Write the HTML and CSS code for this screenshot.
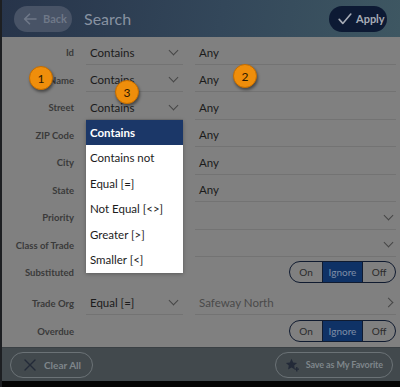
FILE: index.html
```html
<!DOCTYPE html>
<html lang="en">
<head>
    <meta charset="UTF-8">
    <meta name="viewport" content="width=device-width, initial-scale=1.0">
    <title>Search</title>
    <link rel="stylesheet" href="styles.css">
</head>
<body>
<div class="screen">
    <header class="topbar">
        <button class="back-btn">
            <svg width="14" height="12" viewBox="0 0 14 12"><path d="M13 6H2M6.5 1.2L1.6 6l4.9 4.8" fill="none" stroke="currentColor" stroke-width="1.6" stroke-linecap="round" stroke-linejoin="round"/></svg>
            Back
        </button>
        <span class="title">Search</span>
        <button class="apply-btn">
            <svg width="14" height="12" viewBox="0 0 14 12"><path d="M1.2 6.4l3.6 4 8-9.4" fill="none" stroke="currentColor" stroke-width="1.6" stroke-linecap="round" stroke-linejoin="round"/></svg>
            Apply
        </button>
    </header>

    <main class="form">
        <div class="row">
            <span class="label">Id</span>
            <div class="op">Contains <span class="chev"></span></div>
            <div class="val">Any</div>
        </div>
        <div class="row">
            <span class="label">Name</span>
            <div class="op">Contains <span class="chev"></span></div>
            <div class="val">Any</div>
        </div>
        <div class="row">
            <span class="label">Street</span>
            <div class="op">Contains <span class="chev"></span></div>
            <div class="val">Any</div>
        </div>
        <div class="row">
            <span class="label">ZIP Code</span>
            <div class="op">Contains <span class="chev"></span></div>
            <div class="val">Any</div>
        </div>
        <div class="row">
            <span class="label">City</span>
            <div class="op">Contains <span class="chev"></span></div>
            <div class="val">Any</div>
        </div>
        <div class="row">
            <span class="label">State</span>
            <div class="op">Contains <span class="chev"></span></div>
            <div class="val">Any</div>
        </div>
        <div class="row">
            <span class="label">Priority</span>
            <div class="op blank"></div>
            <div class="val"><span></span><span class="chev"></span></div>
        </div>
        <div class="row">
            <span class="label">Class of Trade</span>
            <div class="op blank"></div>
            <div class="val"><span></span><span class="chev"></span></div>
        </div>
        <div class="row toggle-row">
            <span class="label">Substituted</span>
            <div class="switch">
                <span>On</span>
                <span class="on">Ignore</span>
                <span>Off</span>
            </div>
        </div>
        <div class="row trade-row">
            <span class="label">Trade Org</span>
            <div class="op">Equal [=] <span class="chev"></span></div>
            <div class="val muted">Safeway North <span class="chev right"></span></div>
        </div>
        <div class="row toggle-row last">
            <span class="label">Overdue</span>
            <div class="switch">
                <span>On</span>
                <span class="on">Ignore</span>
                <span>Off</span>
            </div>
        </div>

        <ul class="menu">
            <li class="selected">Contains</li>
            <li>Contains not</li>
            <li>Equal [=]</li>
            <li>Not Equal [&lt;&gt;]</li>
            <li>Greater [&gt;]</li>
            <li>Smaller [&lt;]</li>
        </ul>

        <span class="badge b1">1</span>
        <span class="badge b2">2</span>
        <span class="badge b3">3</span>
    </main>

    <footer class="bottombar">
        <button class="pill">
            <svg width="12" height="12" viewBox="0 0 12 12"><path d="M1 1l10 10M11 1L1 11" fill="none" stroke="#232a38" stroke-width="1.4" stroke-linecap="round"/></svg>
            Clear All
        </button>
        <button class="pill fav">
            <svg width="15" height="14" viewBox="0 0 15 14"><path d="M6.5 0.8l1.7 3.6 3.9.5-2.9 2.7.7 3.9-3.4-1.9-3.4 1.9.7-3.9L0.9 4.9l3.9-.5z" fill="#232a38"/><path d="M11.8 9v4.4M9.6 11.2H14" stroke="#232a38" stroke-width="1.3"/></svg>
            Save as My Favorite
        </button>
    </footer>
    <div class="edge"></div>
</div>
</body>
</html>
```

FILE: styles.css
```css
* {
    box-sizing: border-box;
}
body {
    margin: 0;
    font-family: Lato, "Open Sans", Arial, sans-serif;
    background: #000;
}
button {
    font-family: inherit;
    cursor: pointer;
}
.screen {
    width: 400px;
    height: 387px;
    display: flex;
    flex-direction: column;
    border-left: 2px solid #1d1f22;
    background: #808080;
    overflow: hidden;
}
.topbar {
    height: 37px;
    flex: none;
    display: flex;
    align-items: center;
    padding: 0 13px 0 12px;
    background: linear-gradient(100deg, #27344a 0%, #33475a 55%, #3e5762 100%);
}
.back-btn {
    display: flex;
    align-items: center;
    gap: 6px;
    height: 26px;
    width: 58px;
    padding: 0 0 0 9px;
    border: none;
    border-radius: 13px;
    background: #485366;
    color: #6f7888;
    font-size: 11px;
    font-weight: 700;
}
.title {
    margin-left: 12px;
    font-size: 16px;
    color: #8892a1;
}
.apply-btn {
    margin-left: auto;
    display: flex;
    align-items: center;
    gap: 4px;
    height: 26px;
    width: 58px;
    padding: 0 0 0 9px;
    border: none;
    border-radius: 13px;
    background: #0d1a34;
    color: #a7acb6;
    font-size: 11px;
    font-weight: 700;
}
.form {
    position: relative;
    flex: 1;
    padding-right: 4px;
}
.row {
    display: grid;
    grid-template-columns: 72px 97px 1fr;
    column-gap: 12px;
    height: 27.5px;
    font-size: 11.5px;
    color: #1b1b1b;
}
.label {
    text-align: right;
    align-self: center;
    padding-top: 4px;
    font-size: 9.5px;
    font-weight: 700;
    color: #3a3a3a;
}
.op, .val {
    display: flex;
    align-items: center;
    justify-content: space-between;
    padding: 4px 6px 0 4px;
    border-bottom: 1px solid #737373;
}
.val {
    padding-right: 4px;
}
.muted {
    color: #4a4a4a;
}
.chev {
    width: 7px;
    height: 7px;
    margin-top: -4px;
    border-right: 1px solid #464646;
    border-bottom: 1px solid #464646;
    transform: rotate(45deg);
}
.chev.right {
    margin-top: 0;
    transform: rotate(-45deg);
}
.toggle-row {
    height: 30.5px;
}
.toggle-row.last {
    height: 32px;
}
.toggle-row .label {
    padding-top: 0;
}
.switch {
    grid-column: 3;
    justify-self: end;
    align-self: center;
    display: flex;
    height: 22px;
    border: 1.5px solid #101b30;
    border-radius: 11px;
    overflow: hidden;
    font-size: 10px;
    color: #2b2b2b;
}
.switch span {
    display: flex;
    align-items: center;
    justify-content: center;
    width: 32px;
}
.switch span.on {
    width: 41px;
    background: #0f3266;
    color: #7f8ea6;
    border-left: 1px solid #101b30;
    border-right: 1px solid #101b30;
}
.toggle-row:first-of-type .switch {
    margin-top: 2px;
}
.menu {
    position: absolute;
    left: 84px;
    top: 83px;
    width: 97px;
    margin: 0;
    padding: 0;
    list-style: none;
    background: #fff;
    box-shadow: 0 1px 4px rgba(0, 0, 0, 0.3);
    font-size: 11.5px;
    color: #1c1c1c;
}
.menu li {
    height: 25.5px;
    display: flex;
    align-items: center;
    padding-left: 4px;
}
.menu li.selected {
    height: 25px;
    background: #1b3768;
    color: #fff;
    font-weight: 700;
}
.badge {
    position: absolute;
    width: 24px;
    height: 24px;
    border-radius: 50%;
    background: #ef8e0b;
    border: 1px solid #c46d00;
    box-shadow: 1px 2px 3px rgba(0, 0, 0, 0.45);
    display: flex;
    align-items: center;
    justify-content: center;
    font-size: 12px;
    color: #2a1800;
}
.b1 {
    left: 27px;
    top: 29px;
}
.b2 {
    left: 231px;
    top: 27px;
}
.b3 {
    left: 113px;
    top: 43px;
}
.bottombar {
    height: 34px;
    flex: none;
    display: flex;
    align-items: center;
    justify-content: space-between;
    padding: 0 7px 0 8px;
    background: #42494d;
    border-top: 1px solid #3a4044;
}
.pill {
    display: flex;
    align-items: center;
    gap: 8px;
    height: 26px;
    padding: 0 11px 0 13px;
    border: 1.5px solid #6b7276;
    border-radius: 13px;
    background: transparent;
    color: #7f868b;
    font-size: 10px;
    font-weight: 700;
}
.pill.fav {
    gap: 6px;
    padding: 0 9px 0 9px;
    font-size: 9px;
    letter-spacing: -0.1px;
}
.edge {
    height: 6px;
    flex: none;
    background: #050505;
}
```
